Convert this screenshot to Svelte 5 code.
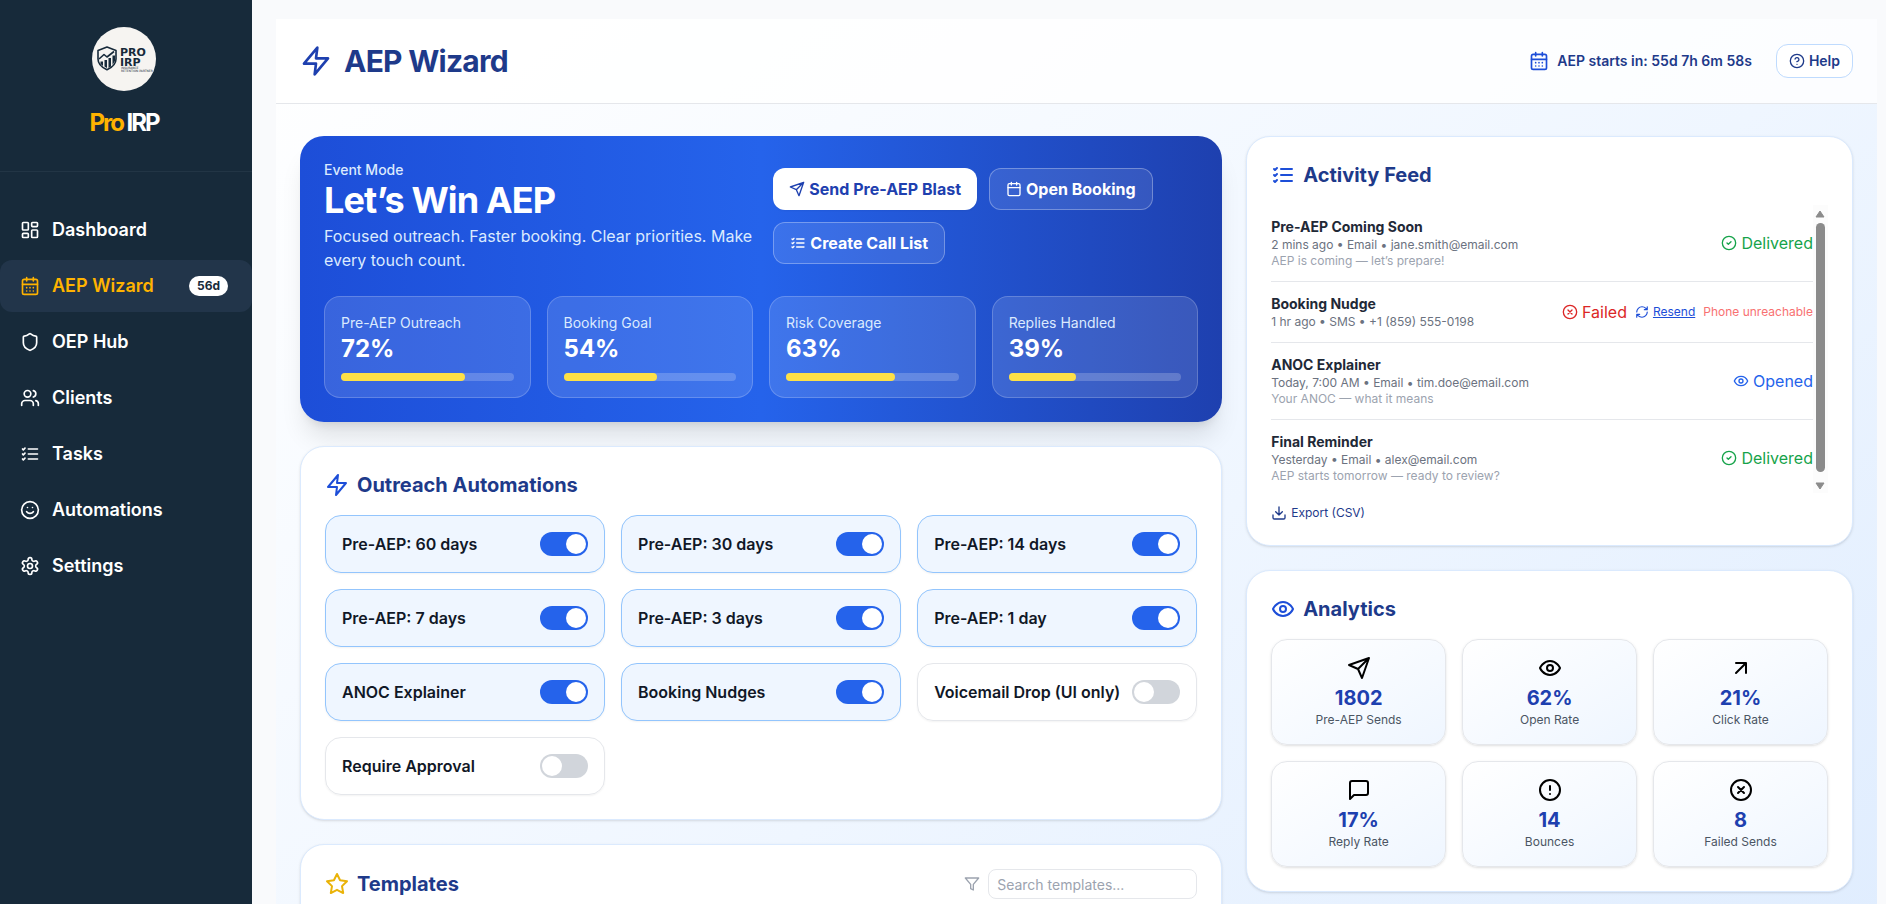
<script>
  const icons = {
    dashboard: '<rect width="7" height="9" x="3" y="3" rx="1"/><rect width="7" height="5" x="14" y="3" rx="1"/><rect width="7" height="9" x="14" y="12" rx="1"/><rect width="7" height="5" x="3" y="16" rx="1"/>',
    calendarDays: '<path d="M8 2v4M16 2v4"/><rect width="18" height="18" x="3" y="4" rx="2"/><path d="M3 10h18M8 14h.01M12 14h.01M16 14h.01M8 18h.01M12 18h.01M16 18h.01"/>',
    calendar: '<path d="M8 2v4M16 2v4"/><rect width="18" height="18" x="3" y="4" rx="2"/><path d="M3 10h18"/>',
    shield: '<path d="M20 13c0 5-3.5 7.5-7.66 8.95a1 1 0 0 1-.67-.01C7.5 20.5 4 18 4 13V6a1 1 0 0 1 1-1c2 0 4.5-1.2 6.24-2.72a1.17 1.17 0 0 1 1.52 0C14.51 3.81 17 5 19 5a1 1 0 0 1 1 1z"/>',
    users: '<path d="M16 21v-2a4 4 0 0 0-4-4H6a4 4 0 0 0-4 4v2"/><circle cx="9" cy="7" r="4"/><path d="M22 21v-2a4 4 0 0 0-3-3.87M16 3.13a4 4 0 0 1 0 7.75"/>',
    tasks: '<path d="M10 6h11M10 12h11M10 18h11M3 6l1 1 2-2M3 12l1 1 2-2M3 18l1 1 2-2"/>',
    smile: '<circle cx="12" cy="12" r="10"/><path d="M8 14s1.5 2 4 2 4-2 4-2M9 9h.01M15 9h.01"/>',
    settings: '<path d="M12.22 2h-.44a2 2 0 0 0-2 2v.18a2 2 0 0 1-1 1.73l-.43.25a2 2 0 0 1-2 0l-.15-.08a2 2 0 0 0-2.73.73l-.22.38a2 2 0 0 0 .73 2.73l.15.1a2 2 0 0 1 1 1.72v.51a2 2 0 0 1-1 1.74l-.15.09a2 2 0 0 0-.73 2.73l.22.38a2 2 0 0 0 2.73.73l.15-.08a2 2 0 0 1 2 0l.43.25a2 2 0 0 1 1 1.73V20a2 2 0 0 0 2 2h.44a2 2 0 0 0 2-2v-.18a2 2 0 0 1 1-1.73l.43-.25a2 2 0 0 1 2 0l.15.08a2 2 0 0 0 2.73-.73l.22-.39a2 2 0 0 0-.73-2.73l-.15-.08a2 2 0 0 1-1-1.74v-.5a2 2 0 0 1 1-1.74l.15-.09a2 2 0 0 0 .73-2.73l-.22-.38a2 2 0 0 0-2.73-.73l-.15.08a2 2 0 0 1-2 0l-.43-.25a2 2 0 0 1-1-1.73V4a2 2 0 0 0-2-2z"/><circle cx="12" cy="12" r="3"/>',
    zap: '<polygon points="13 2 3 14 12 14 11 22 21 10 12 10 13 2"/>',
    help: '<circle cx="12" cy="12" r="10"/><path d="M9.09 9a3 3 0 0 1 5.83 1c0 2-3 3-3 3M12 17h.01"/>',
    send: '<path d="m22 2-7 20-4-9-9-4ZM22 2 11 13"/>',
    eye: '<path d="M2 12s3-7 10-7 10 7 10 7-3 7-10 7-10-7-10-7Z"/><circle cx="12" cy="12" r="3"/>',
    arrow: '<path d="M7 7h10v10M7 17 17 7"/>',
    message: '<path d="M21 15a2 2 0 0 1-2 2H7l-4 4V5a2 2 0 0 1 2-2h14a2 2 0 0 1 2 2z"/>',
    alert: '<circle cx="12" cy="12" r="10"/><path d="M12 8v4M12 16h.01"/>',
    failed: '<circle cx="12" cy="12" r="10"/><path d="m15 9-6 6M9 9l6 6"/>',
    check: '<circle cx="12" cy="12" r="10"/><path d="m9 12 2 2 4-4"/>',
    refresh: '<path d="M3 12a9 9 0 0 1 9-9 9.75 9.75 0 0 1 6.74 2.74L21 8M21 3v5h-5M21 12a9 9 0 0 1-9 9 9.75 9.75 0 0 1-6.74-2.74L3 16M8 16H3v5"/>',
    download: '<path d="M21 15v4a2 2 0 0 1-2 2H5a2 2 0 0 1-2-2v-4M7 10l5 5 5-5M12 15V3"/>',
    star: '<polygon points="12 2 15.09 8.26 22 9.27 17 14.14 18.18 21.02 12 17.77 5.82 21.02 7 14.14 2 9.27 8.91 8.26 12 2"/>',
    filter: '<polygon points="22 3 2 3 10 12.46 10 19 14 21 14 12.46 22 3"/>'
  };

  const nav = [
    { label: 'Dashboard', icon: 'dashboard' },
    { label: 'AEP Wizard', icon: 'calendarDays', badge: '56d' },
    { label: 'OEP Hub', icon: 'shield' },
    { label: 'Clients', icon: 'users' },
    { label: 'Tasks', icon: 'tasks' },
    { label: 'Automations', icon: 'smile' },
    { label: 'Settings', icon: 'settings' }
  ];

  const goals = [
    { label: 'Pre-AEP Outreach', value: 72 },
    { label: 'Booking Goal', value: 54 },
    { label: 'Risk Coverage', value: 63 },
    { label: 'Replies Handled', value: 39 }
  ];

  let automations = $state([
    { label: 'Pre-AEP: 60 days', on: true },
    { label: 'Pre-AEP: 30 days', on: true },
    { label: 'Pre-AEP: 14 days', on: true },
    { label: 'Pre-AEP: 7 days', on: true },
    { label: 'Pre-AEP: 3 days', on: true },
    { label: 'Pre-AEP: 1 day', on: true },
    { label: 'ANOC Explainer', on: true },
    { label: 'Booking Nudges', on: true },
    { label: 'Voicemail Drop (UI only)', on: false },
    { label: 'Require Approval', on: false }
  ]);

  const feed = [
    { title: 'Pre-AEP Coming Soon', meta: '2 mins ago • Email • jane.smith@email.com', note: 'AEP is coming — let’s prepare!', status: 'Delivered' },
    { title: 'Booking Nudge', meta: '1 hr ago • SMS • +1 (859) 555-0198', status: 'Failed', reason: 'Phone unreachable' },
    { title: 'ANOC Explainer', meta: 'Today, 7:00 AM • Email • tim.doe@email.com', note: 'Your ANOC — what it means', status: 'Opened' },
    { title: 'Final Reminder', meta: 'Yesterday • Email • alex@email.com', note: 'AEP starts tomorrow — ready to review?', status: 'Delivered' }
  ];
  const statusIcon = { Delivered: 'check', Failed: 'failed', Opened: 'eye' };

  const stats = [
    { icon: 'send', value: '1802', label: 'Pre-AEP Sends' },
    { icon: 'eye', value: '62%', label: 'Open Rate' },
    { icon: 'arrow', value: '21%', label: 'Click Rate' },
    { icon: 'message', value: '17%', label: 'Reply Rate' },
    { icon: 'alert', value: '14', label: 'Bounces' },
    { icon: 'failed', value: '8', label: 'Failed Sends' }
  ];

  let query = $state('');
</script>

{#snippet icon(name, size)}
  <svg class="icon" width={size} height={size} viewBox="0 0 24 24" fill="none" stroke="currentColor" stroke-width="2" stroke-linecap="round" stroke-linejoin="round" aria-hidden="true">{@html icons[name]}</svg>
{/snippet}

<div class="app">
  <aside>
    <div class="brand">
      <svg class="logo" width="64" height="64" viewBox="0 0 64 64" aria-hidden="true">
        <circle cx="32" cy="32" r="32" fill="#f6f4f1" />
        <g fill="none" stroke="#172a3a" stroke-width="1.6" stroke-linejoin="round">
          <path d="M15 20 24 23.500V32c0 5-4 8.500-9 10.800C10 40.500 6 37 6 32v-8.500Z" />
          <path d="m7 32 5-4.500 3 2.500 7-5.500" />
        </g>
        <path d="M8.500 34.500h2.500V39l-2.500-2ZM12.500 33h2.500v8l-2.500-1.500ZM16.500 31h2.500v8.500L16.500 41ZM20.500 28.500H23V34l-2.500 4Z" fill="#172a3a" />
        <text x="28" y="29" class="mark">PRO</text>
        <text x="28" y="39" class="mark">IRP</text>
        <text x="29" y="42" class="tiny">INSURANCE</text>
        <text x="29" y="45" class="tiny">RETENTION PARTNER</text>
      </svg>
      <div class="name"><span>Pro</span> IRP</div>
    </div>
    <nav>
      {#each nav as item}
        <a href="#top" class:active={item.badge}>
          {@render icon(item.icon, 20)}
          <span>{item.label}</span>
          {#if item.badge}<b>{item.badge}</b>{/if}
        </a>
      {/each}
    </nav>
  </aside>

  <main>
    <div class="panel">
      <header>
        <span class="bolt">{@render icon('zap', 32)}</span>
        <h1>AEP Wizard</h1>
        <div class="countdown">{@render icon('calendarDays', 20)}<span>AEP starts in: 55d 7h 6m 58s</span></div>
        <button class="help">{@render icon('help', 16)}Help</button>
      </header>

      <div class="content">
        <div class="left">
          <section class="hero">
            <div class="intro">
              <div>
                <div class="mode">Event Mode</div>
                <h2>Let’s Win AEP</h2>
                <p>Focused outreach. Faster booking. Clear priorities. Make every touch count.</p>
              </div>
              <div class="actions">
                <button class="primary">{@render icon('send', 16)}Send Pre-AEP Blast</button>
                <button>{@render icon('calendar', 16)}Open Booking</button>
                <button>{@render icon('tasks', 16)}Create Call List</button>
              </div>
            </div>
            <div class="goals">
              {#each goals as goal}
                <div class="goal">
                  <div class="label">{goal.label}</div>
                  <div class="value">{goal.value}%</div>
                  <div class="bar"><div style="width: {goal.value}%"></div></div>
                </div>
              {/each}
            </div>
          </section>

          <section class="card">
            <h3>{@render icon('zap', 24)}Outreach Automations</h3>
            <div class="toggles">
              {#each automations as item}
                <label class:on={item.on}>
                  <span>{item.label}</span>
                  <input type="checkbox" role="switch" bind:checked={item.on} />
                </label>
              {/each}
            </div>
          </section>

          <section class="card templates">
            <div class="row">
              <h3 class="gold">{@render icon('star', 24)}Templates</h3>
              <label class="search">
                {@render icon('filter', 16)}
                <input type="text" placeholder="Search templates..." aria-label="Search templates" bind:value={query} />
              </label>
            </div>
          </section>
        </div>

        <div class="right">
          <section class="card">
            <h3>{@render icon('tasks', 24)}Activity Feed</h3>
            <div class="scroller">
              <ul>
                {#each feed as item}
                  <li>
                    <div>
                      <div class="title">{item.title}</div>
                      <div class="meta">{item.meta}</div>
                      {#if item.note}<div class="note">{item.note}</div>{/if}
                    </div>
                    <div class="state">
                      <span class="status {item.status.toLowerCase()}">{@render icon(statusIcon[item.status], 16)}{item.status}</span>
                      {#if item.reason}
                        <button class="resend">{@render icon('refresh', 14)}<span>Resend</span></button>
                        <span class="reason">{item.reason}</span>
                      {/if}
                    </div>
                  </li>
                {/each}
              </ul>
              <div class="track" aria-hidden="true">
                <svg width="10" height="8" viewBox="0 0 10 8"><path d="M5 1 9 7H1Z" /></svg>
                <div class="thumb"></div>
                <svg width="10" height="8" viewBox="0 0 10 8"><path d="M5 7 9 1H1Z" /></svg>
              </div>
            </div>
            <button class="export">{@render icon('download', 16)}Export (CSV)</button>
          </section>

          <section class="card">
            <h3>{@render icon('eye', 24)}Analytics</h3>
            <div class="stats">
              {#each stats as stat}
                <div class="stat">
                  {@render icon(stat.icon, 24)}
                  <div class="number">{stat.value}</div>
                  <div class="caption">{stat.label}</div>
                </div>
              {/each}
            </div>
          </section>
        </div>
      </div>
    </div>
  </main>
</div>

<style>
  :global(body) { margin: 0; }
  * { box-sizing: border-box; }
  h1, h2, h3, p, ul { margin: 0; padding: 0; }
  button { font: inherit; cursor: pointer; display: inline-flex; align-items: center; gap: 4px; }
  .icon { flex: none; display: block; }

  .app {
    display: flex;
    height: 100vh;
    overflow: hidden;
    font: 16px/24px Inter, sans-serif;
    color: #111827;
    background: #f9fafc;
  }

  aside { flex: none; width: 252px; background: #172a3a; color: #fff; }
  .brand {
    display: flex;
    flex-direction: column;
    align-items: center;
    gap: 17px;
    height: 172px;
    padding: 27px 4px 0 0;
    border-bottom: 1px solid #223545;
  }
  .logo { display: block; }
  .mark { font: bold 11px "DejaVu Sans", sans-serif; fill: #172a3a; }
  .tiny { font: 3px "DejaVu Sans", sans-serif; fill: #172a3a; }
  .name { font-size: 24px; line-height: 30px; font-weight: 700; letter-spacing: -2px; }
  .name span { color: #ffb300; }
  nav { display: flex; flex-direction: column; gap: 4px; padding-top: 32px; }
  nav a {
    display: flex;
    align-items: center;
    gap: 12px;
    height: 52px;
    padding: 0 24px 0 20px;
    border-radius: 12px;
    color: #fff;
    font-size: 18px;
    font-weight: 600;
    text-decoration: none;
  }
  nav a.active { background: #22354a; color: #ffb300; }
  nav b {
    margin-left: auto;
    padding: 0 8px;
    border-radius: 10px;
    background: #fff;
    color: #172a3a;
    font-size: 12px;
    line-height: 20px;
    font-weight: 700;
  }

  main { flex: 1; min-width: 0; overflow: hidden; padding: 19px 9px 0 24px; }
  .panel { background: linear-gradient(to bottom right, #fff, #eff6ff 50%, #dbeafe); }
  header {
    display: flex;
    align-items: center;
    padding: 24px;
    background: rgba(255, 255, 255, 0.8);
    border-bottom: 1px solid #e5e7eb;
    color: #1e3a8a;
  }
  .bolt { color: #1e40af; margin-right: 12px; }
  h1 { font-size: 30px; line-height: 36px; font-weight: 700; letter-spacing: -0.025em; }
  .countdown { display: flex; align-items: center; gap: 8px; margin: 0 24px 0 auto; font-size: 14px; line-height: 20px; font-weight: 600; }
  .countdown :global(svg) { color: #1d4ed8; }
  .help {
    height: 34px;
    margin: -8px 0;
    padding: 0 12px;
    border: 1px solid #bfdbfe;
    border-radius: 12px;
    background: #fff;
    color: #1e3a8a;
    font-size: 14px;
    font-weight: 600;
  }

  .content { display: grid; grid-template-columns: repeat(5, minmax(0, 1fr)); gap: 24px; padding: 32px 24px 24px; align-items: start; }
  .left, .right { display: flex; flex-direction: column; gap: 24px; }
  .left { grid-column: span 3; }
  .right { grid-column: span 2; }

  .hero {
    padding: 24px;
    border-radius: 24px;
    color: #fff;
    background: linear-gradient(to right, #1d4ed8, #2563eb, #1e40af);
    box-shadow: 0 20px 25px -5px rgba(0, 0, 0, 0.1), 0 8px 10px -6px rgba(0, 0, 0, 0.1);
  }
  .intro { display: grid; grid-template-columns: minmax(0, 51fr) minmax(0, 50fr); gap: 16px; align-items: center; }
  .mode { font-size: 14px; line-height: 20px; font-weight: 500; color: #dbeafe; }
  h2 { font-size: 36px; line-height: 40px; font-weight: 700; letter-spacing: -0.025em; }
  .hero p { margin-top: 4px; color: #dbeafe; }
  .actions { display: flex; flex-wrap: wrap; gap: 12px; }
  .actions button {
    height: 42px;
    padding: 0 16px;
    border: 1px solid rgba(255, 255, 255, 0.3);
    border-radius: 12px;
    background: rgba(255, 255, 255, 0.1);
    color: #fff;
    font-weight: 700;
  }
  .actions .primary { border: 0; background: #fff; color: #1e40af; box-shadow: 0 1px 2px rgba(0, 0, 0, 0.05); }
  .goals { display: grid; grid-template-columns: repeat(4, minmax(0, 1fr)); gap: 16px; margin-top: 24px; }
  .goal { padding: 16px; border: 1px solid rgba(255, 255, 255, 0.2); border-radius: 16px; background: rgba(255, 255, 255, 0.12); }
  .label { font-size: 14px; line-height: 20px; color: #dbeafe; }
  .value { font-size: 24px; line-height: 32px; font-weight: 700; }
  .bar { height: 8px; margin-top: 8px; border-radius: 4px; background: rgba(255, 255, 255, 0.2); }
  .bar div { height: 8px; border-radius: 4px; background: #fde047; }

  .card {
    padding: 24px;
    border: 1px solid #dbeafe;
    border-radius: 24px;
    background: #fff;
    box-shadow: 0 1px 3px rgba(0, 0, 0, 0.1), 0 1px 2px -1px rgba(0, 0, 0, 0.1);
  }
  h3 { display: flex; align-items: center; gap: 8px; font-size: 20px; line-height: 28px; font-weight: 700; color: #1e3a8a; }
  h3 :global(svg) { color: #1d4ed8; }
  h3.gold :global(svg) { color: #eab308; }

  .toggles { display: grid; grid-template-columns: repeat(3, minmax(0, 1fr)); gap: 16px; margin-top: 16px; }
  .toggles label {
    display: flex;
    align-items: center;
    justify-content: space-between;
    padding: 16px;
    border: 1px solid #e5e7eb;
    border-radius: 16px;
    font-weight: 600;
    white-space: nowrap;
    box-shadow: 0 1px 2px rgba(0, 0, 0, 0.05);
  }
  .toggles label.on { border-color: #93c5fd; background: #eff6ff; }
  .toggles input {
    appearance: none;
    flex: none;
    width: 48px;
    height: 24px;
    margin: 0;
    padding: 2px;
    border-radius: 12px;
    background: #d1d5db;
  }
  .toggles input::before { content: ""; display: block; width: 20px; height: 20px; border-radius: 50%; background: #fff; }
  .toggles input:checked { background: #2563eb; }
  .toggles input:checked::before { margin-left: auto; }

  .templates { min-height: 360px; }
  .row { display: flex; align-items: center; justify-content: space-between; }
  .search { display: flex; align-items: center; gap: 8px; color: #9ca3af; }
  .search input {
    width: 209px;
    height: 30px;
    padding: 0 8px;
    border: 1px solid #e5e7eb;
    border-radius: 8px;
    font: 14px/20px Inter, sans-serif;
    color: #111827;
  }
  .search input::placeholder { color: #9ca3af; }

  .scroller { display: flex; height: 288px; margin-top: 16px; }
  .scroller ul { flex: 1; overflow-y: auto; scrollbar-width: none; list-style: none; }
  li { display: flex; align-items: center; justify-content: space-between; padding: 12px 0; }
  li + li { border-top: 1px solid #e5e7eb; }
  .title { font-size: 14px; line-height: 20px; font-weight: 700; color: #1f2937; }
  .meta, .note, .reason, .resend, .export { font-size: 12px; line-height: 16px; }
  .meta { color: #6b7280; }
  .note { color: #9ca3af; }
  .state { display: flex; align-items: center; gap: 8px; }
  .status { display: flex; align-items: center; gap: 4px; }
  .delivered { color: #16a34a; }
  .failed { color: #dc2626; }
  .opened { color: #2563eb; }
  .resend, .export { padding: 0; border: 0; background: none; }
  .resend { color: #1d4ed8; }
  .resend span { text-decoration: underline; }
  .reason { color: #f87171; }
  .track {
    display: flex;
    flex-direction: column;
    align-items: center;
    gap: 5px;
    width: 15px;
    padding: 5px 0 3px;
    background: #fcfcfc;
  }
  .track svg { flex: none; display: block; fill: #8b8b8b; stroke: #8b8b8b; stroke-linejoin: round; }
  .thumb { flex: 1; width: 9px; margin-bottom: 5px; border-radius: 5px; background: #8b8b8b; }
  .export { display: flex; margin-top: 12px; color: #1e3a8a; }

  .stats { display: grid; grid-template-columns: repeat(3, minmax(0, 1fr)); gap: 16px; margin-top: 16px; }
  .stat {
    display: flex;
    flex-direction: column;
    align-items: center;
    padding: 16px;
    border: 1px solid #e5e7eb;
    border-radius: 16px;
    background: linear-gradient(to bottom right, #fff, #eff6ff);
    color: #000;
    box-shadow: 0 1px 3px rgba(0, 0, 0, 0.1), 0 1px 2px -1px rgba(0, 0, 0, 0.1);
  }
  .number { margin-top: 4px; font-size: 20px; line-height: 28px; font-weight: 700; color: #1e40af; }
  .caption { font-size: 12px; line-height: 16px; color: #4b5563; }
</style>
